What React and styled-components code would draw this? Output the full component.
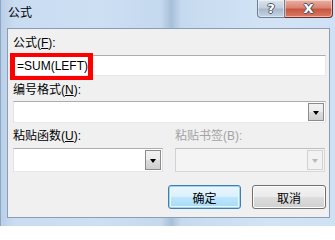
import styled, { createGlobalStyle } from 'styled-components';

const GlobalStyle = createGlobalStyle`
  html, body {
    margin: 0;
    padding: 0;
    background: #ffffff;
  }
  body {
    font-family: "Liberation Sans", "Noto Sans CJK SC", sans-serif;
    font-size: 12px;
    color: #000000;
  }
`;

const Window = styled.div`
  width: 335px;
  height: 226px;
  display: flex;
  flex-direction: column;
  background: linear-gradient(
    90deg,
    #b9cfe7 0%,
    #c9dcf1 4%,
    #cddff3 30%,
    #c4d8ee 48%,
    #a8bfd9 51%,
    #c6daef 54%,
    #d2e3f5 80%,
    #cfe1f4 100%
  );
  box-sizing: border-box;
  border-left: 1px solid #8ea6c2;
`;

const TitleBar = styled.div`
  height: 28px;
  display: flex;
  justify-content: space-between;
  align-items: flex-start;
  padding: 0 2px 0 7px;
`;

const Title = styled.div`
  margin-top: 5px;
  font-size: 12px;
  line-height: 16px;
  color: #000000;
`;

const Caption = styled.div`
  display: flex;
`;

const CaptionButton = styled.div`
  width: ${(p) => p.$w}px;
  height: 18px;
  box-sizing: border-box;
  display: flex;
  align-items: center;
  justify-content: center;
  border: 1px solid ${(p) => (p.$close ? '#6e2c24' : '#6e7e94')};
  border-top: none;
  border-radius: ${(p) => (p.$close ? '0 0 4px 0' : '0 0 0 4px')};
  border-left-width: ${(p) => (p.$close ? 0 : 1)}px;
  background: ${(p) =>
    p.$close
      ? 'linear-gradient(180deg, #eab0a3 0%, #d98474 45%, #c75641 55%, #dc7a64 100%)'
      : 'linear-gradient(180deg, #dbe4ef 0%, #c3cfdd 45%, #a9b9cc 55%, #c5d4e4 100%)'};
  box-shadow: inset 0 0 0 1px rgba(255, 255, 255, 0.45);
  color: #ffffff;
  font-family: "DejaVu Sans", sans-serif;
  font-weight: bold;
  font-size: 13px;
  line-height: 1;
  text-shadow: -1px 0 #4a5666, 1px 0 #4a5666, 0 -1px #4a5666, 0 1px #4a5666;
`;

const Panel = styled.div`
  margin: 0 5px 8px 6px;
  flex: 1;
  border: 1px solid #8a9db4;
  background: #f0f0f0;
  padding: 6px 3px 7px 5px;
  display: flex;
  flex-direction: column;
`;

const Label = styled.div`
  font-size: 12px;
  line-height: 16px;
  color: ${(p) => (p.$disabled ? '#a3a3a3' : '#000000')};
  margin-top: ${(p) => p.$gap || 0}px;
  white-space: nowrap;
`;

const Key = styled.span`
  text-decoration: underline;
`;

const Field = styled.div`
  position: relative;
  margin-top: 4px;
  height: 21px;
  box-sizing: border-box;
  border: 1px solid #abadb3;
  border-color: #abadb3 #e3e9ef #e3e9ef #e2e3ea;
  background: #ffffff;
  display: flex;
  align-items: center;
  padding-left: 3px;
  font-size: 12px;
`;

const FieldText = styled.span`
  position: relative;
  z-index: 1;
`;

const Highlight = styled.div`
  position: absolute;
  left: -4px;
  top: -3px;
  width: 83px;
  height: 27px;
  box-sizing: border-box;
  border: 5px solid #ff0000;
  border-top-width: 4px;
  border-bottom-width: 4px;
`;

const Combo = styled.div`
  margin-top: ${(p) => p.$gap || 0}px;
  height: ${(p) => p.$h || 22}px;
  box-sizing: border-box;
  border: 1px solid ${(p) => (p.$disabled ? '#c4c8cc' : '#abadb3')};
  border-color: ${(p) =>
    p.$disabled ? '#bcc0c4 #d6d9dc #d6d9dc #d0d3d6' : '#abadb3 #dbdfe6 #e3e9ef #e2e3ea'};
  background: ${(p) => (p.$disabled ? '#f4f4f4' : '#ffffff')};
  display: flex;
  justify-content: flex-end;
  padding: 1px;
`;

const ArrowButton = styled.div`
  width: 16px;
  box-sizing: border-box;
  border: 1px solid ${(p) => (p.$disabled ? '#d2d2d2' : '#8b8b8b')};
  background: ${(p) =>
    p.$disabled
      ? '#f2f2f2'
      : 'linear-gradient(180deg, #f2f2f2 0%, #ebebeb 50%, #dddddd 51%, #cfcfcf 100%)'};
  display: flex;
  align-items: center;
  justify-content: center;
  &::after {
    content: '';
    border-left: 3.5px solid transparent;
    border-right: 3.5px solid transparent;
    border-top: 4px solid ${(p) => (p.$disabled ? '#b8b8b8' : '#000000')};
    margin-top: 1px;
  }
`;

const TwoCols = styled.div`
  display: grid;
  grid-template-columns: 150px 150px;
  column-gap: 12px;
  margin-top: ${(p) => p.$gap || 0}px;
`;

const Buttons = styled.div`
  margin-top: 13px;
  display: flex;
  justify-content: flex-end;
  gap: 11px;
`;

const Button = styled.div`
  width: ${(p) => p.$w}px;
  height: 24px;
  box-sizing: border-box;
  border: 1px solid ${(p) => (p.$default ? '#3c7fb1' : '#707070')};
  border-radius: 3px;
  background: ${(p) =>
    p.$default
      ? 'linear-gradient(180deg, #eaf6fd 0%, #d9f0fc 50%, #bee6fd 51%, #a7d9f5 100%)'
      : 'linear-gradient(180deg, #f2f2f2 0%, #ebebeb 50%, #dddddd 51%, #cfcfcf 100%)'};
  box-shadow: ${(p) =>
    p.$default ? 'inset 0 0 0 1px #9fd4f0, inset 0 0 0 2px #eaf6fd' : 'inset 0 0 0 1px #fcfcfc'};
  display: flex;
  align-items: center;
  justify-content: center;
  font-size: 12px;
`;

export default function App() {
  return (
    <>
      <GlobalStyle />
      <Window>
        <TitleBar>
          <Title>公式</Title>
          <Caption>
            <CaptionButton $w={28}>?</CaptionButton>
            <CaptionButton $w={48} $close>X</CaptionButton>
          </Caption>
        </TitleBar>
        <Panel>
          <Label>
            公式(<Key>F</Key>):
          </Label>
          <Field>
            <FieldText>=SUM(LEFT)</FieldText>
            <Highlight />
          </Field>
          <Label $gap={6}>
            编号格式(<Key>N</Key>):
          </Label>
          <Combo $gap={3}>
            <ArrowButton />
          </Combo>
          <TwoCols $gap={5}>
            <Label>
              粘贴函数(<Key>U</Key>):
            </Label>
            <Label $disabled>粘贴书签(B):</Label>
          </TwoCols>
          <TwoCols $gap={4}>
            <Combo $h={24}>
              <ArrowButton />
            </Combo>
            <Combo $h={24} $disabled>
              <ArrowButton $disabled />
            </Combo>
          </TwoCols>
          <Buttons>
            <Button $w={73} $default>确定</Button>
            <Button $w={74}>取消</Button>
          </Buttons>
        </Panel>
      </Window>
    </>
  );
}
